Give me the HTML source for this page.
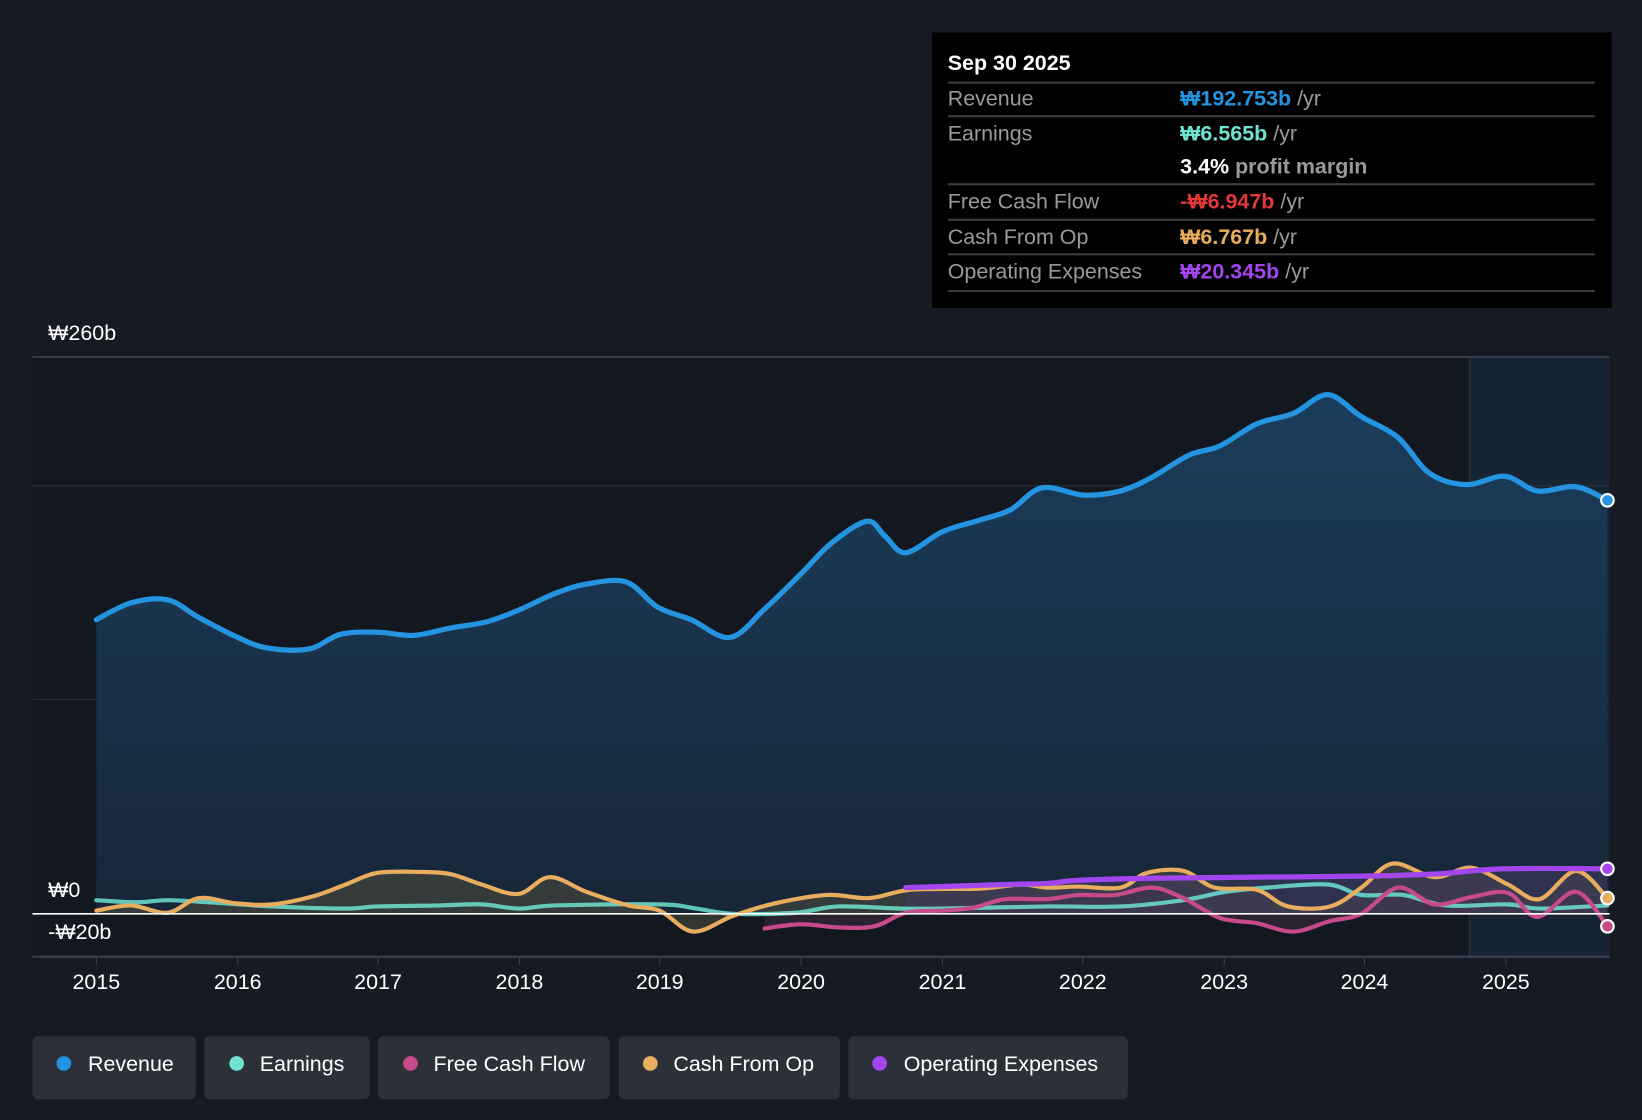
<!DOCTYPE html>
<html><head><meta charset="utf-8">
<style>
html,body{margin:0;padding:0;background:#151a23;}
svg{display:block;font-family:"Liberation Sans","Noto Sans CJK KR",sans-serif;}
</style></head>
<body>
<svg width="1642" height="1120" viewBox="0 0 1568 1070" preserveAspectRatio="none" xmlns="http://www.w3.org/2000/svg">
<defs>
<linearGradient id="rg" x1="0" y1="0" x2="0" y2="1">
<stop offset="0" stop-color="#1a3d5c"/><stop offset="1" stop-color="#172637"/>
</linearGradient>
</defs>
<rect width="1568" height="1070" fill="#151a23"/>
<rect x="31" y="341" width="1506" height="573" fill="#121720"/>
<rect x="1403" y="341" width="134" height="573" fill="#172434"/>
<line x1="1403" y1="341" x2="1403" y2="914" stroke="#2a3646" stroke-width="1"/>
<line x1="31" y1="341" x2="1537" y2="341" stroke="#3a4150" stroke-width="1.5"/>
<line x1="31" y1="464" x2="1537" y2="464" stroke="#2b313d" stroke-width="1"/>
<line x1="31" y1="668" x2="1537" y2="668" stroke="#2b313d" stroke-width="1"/>
<g id="areas"></g>
<g id="lines" fill="none" stroke-linejoin="round" stroke-linecap="round">
<polyline data-c="#6fe3d0" stroke="#6fe3d0" stroke-width="4" opacity="0.85" points="92,860 130,862 160,860 200,862 260,866 330,868 360,866 420,865 460,864 495,868 530,865 630,864 665,868 700,873 760,872 800,866 860,868 900,868 1000,866 1070,866 1130,860 1170,852 1210,848 1268,845 1300,855 1340,855 1380,865 1440,864 1470,868 1535,865"/>
<polyline data-f="#4a4a3e" stroke="#e8ad5e" stroke-width="4" points="92,870 125,865 160,872 190,858 225,863 260,864 300,856 330,845 360,834 400,833 430,835 460,845 495,854 525,838 560,852 600,865 630,870 662,890 700,875 740,863 790,855 830,858 870,850 935,849 975,845 1000,848 1030,847 1070,848 1095,834 1130,832 1160,848 1200,850 1230,866 1270,866 1300,848 1330,825 1370,838 1405,829 1440,845 1470,859 1505,832 1535,858"/>
<polyline data-f="#3a2a38" stroke="#c74a8a" stroke-width="4" points="730,887 765,883 800,886 835,885 865,872 900,870 930,867 960,859 1000,859 1030,855 1065,855 1100,848 1130,858 1165,877 1200,882 1235,890 1270,880 1300,873 1335,848 1370,864 1405,857 1440,853 1468,876 1505,852 1535,885"/>
<polyline data-f="#3f3a5e" stroke="#a446f0" stroke-width="5" points="865,848 960,845 1000,844 1030,841 1100,839 1200,838 1300,837 1370,835 1437,830 1535,830"/>
<polyline data-f="url(#rg)" data-o="1" stroke="#2594e0" stroke-width="5" points="92,592 125,576 160,573 190,590 225,608 255,619 295,620 325,606 360,604 395,607 430,600 465,594 495,583 530,567 560,558 598,556 628,580 660,592 697,609 730,582 765,548 795,518 828,498 845,512 865,528 900,508 935,497 965,487 995,466 1035,473 1070,469 1100,456 1135,435 1165,426 1200,405 1235,395 1268,377 1300,398 1335,418 1365,452 1400,463 1437,455 1468,469 1505,465 1535,478"/>
</g>
<line x1="31" y1="873" x2="1537" y2="873" stroke="#ffffff" stroke-width="1.5"/>
<line x1="31" y1="914" x2="1537" y2="914" stroke="#3a4150" stroke-width="2"/>
<circle cx="1535" cy="478" r="6" fill="#2594e0" stroke="#fff" stroke-width="2"/>
<circle cx="1535" cy="830" r="6" fill="#a446f0" stroke="#fff" stroke-width="2"/>
<circle cx="1535" cy="858" r="6" fill="#e8ad5e" stroke="#fff" stroke-width="2"/>
<circle cx="1535" cy="885" r="6" fill="#c74a8a" stroke="#fff" stroke-width="2"/>
<g fill="#fff" font-size="20.5">
<text x="46" y="325">₩260b</text>
<text x="46" y="857">₩0</text>
<text x="46" y="897">-₩20b</text>
</g>
<g stroke="#3a4150" stroke-width="1">
<line x1="92" y1="914" x2="92" y2="922"/><line x1="227" y1="914" x2="227" y2="922"/><line x1="361" y1="914" x2="361" y2="922"/><line x1="496" y1="914" x2="496" y2="922"/><line x1="630" y1="914" x2="630" y2="922"/><line x1="765" y1="914" x2="765" y2="922"/><line x1="900" y1="914" x2="900" y2="922"/><line x1="1034" y1="914" x2="1034" y2="922"/><line x1="1169" y1="914" x2="1169" y2="922"/><line x1="1303" y1="914" x2="1303" y2="922"/><line x1="1438" y1="914" x2="1438" y2="922"/>
</g>
<g fill="#fff" font-size="20.5" text-anchor="middle">
<text x="92" y="945">2015</text><text x="227" y="945">2016</text><text x="361" y="945">2017</text><text x="496" y="945">2018</text><text x="630" y="945">2019</text><text x="765" y="945">2020</text><text x="900" y="945">2021</text><text x="1034" y="945">2022</text><text x="1169" y="945">2023</text><text x="1303" y="945">2024</text><text x="1438" y="945">2025</text>
</g>
<rect x="890" y="31" width="649" height="263" fill="#000"/>
<text x="905" y="67" fill="#fff" font-size="20.5" font-weight="bold">Sep 30 2025</text>
<g stroke="#3d3d3d" stroke-width="2">
<line x1="905" y1="79" x2="1523" y2="79"/><line x1="905" y1="111" x2="1523" y2="111"/><line x1="905" y1="176" x2="1523" y2="176"/><line x1="905" y1="210" x2="1523" y2="210"/><line x1="905" y1="243" x2="1523" y2="243"/><line x1="905" y1="278" x2="1523" y2="278"/>
</g>
<g font-size="20.5" fill="#9a9a9a">
<text x="905" y="101">Revenue</text>
<text x="905" y="134">Earnings</text>
<text x="905" y="199">Free Cash Flow</text>
<text x="905" y="233">Cash From Op</text>
<text x="905" y="266">Operating Expenses</text>
</g>
<g font-size="20.5" font-weight="bold">
<text x="1127" y="101"><tspan fill="#2594e0">₩192.753b</tspan><tspan fill="#9a9a9a" font-weight="normal"> /yr</tspan></text>
<text x="1127" y="134"><tspan fill="#6fe3d0">₩6.565b</tspan><tspan fill="#9a9a9a" font-weight="normal"> /yr</tspan></text>
<text x="1127" y="166"><tspan fill="#fff">3.4%</tspan><tspan fill="#9a9a9a"> profit margin</tspan></text>
<text x="1127" y="199"><tspan fill="#e5383b">-₩6.947b</tspan><tspan fill="#9a9a9a" font-weight="normal"> /yr</tspan></text>
<text x="1127" y="233"><tspan fill="#e8ad5e">₩6.767b</tspan><tspan fill="#9a9a9a" font-weight="normal"> /yr</tspan></text>
<text x="1127" y="266"><tspan fill="#a446f0">₩20.345b</tspan><tspan fill="#9a9a9a" font-weight="normal"> /yr</tspan></text>
</g>
<g fill="#2c3039">
<rect x="31" y="990" width="156" height="60" rx="5"/>
<rect x="195" y="990" width="158" height="60" rx="5"/>
<rect x="361" y="990" width="221" height="60" rx="5"/>
<rect x="591" y="990" width="211" height="60" rx="5"/>
<rect x="810" y="990" width="267" height="60" rx="5"/>
</g>
<circle cx="61" cy="1016" r="7" fill="#2594e0"/>
<circle cx="226" cy="1016" r="7" fill="#6fe3d0"/>
<circle cx="392" cy="1016" r="7" fill="#c74a8a"/>
<circle cx="621" cy="1016" r="7" fill="#e8ad5e"/>
<circle cx="840" cy="1016" r="7" fill="#a446f0"/>
<g fill="#fff" font-size="20.5">
<text x="84" y="1023">Revenue</text>
<text x="248" y="1023">Earnings</text>
<text x="414" y="1023">Free Cash Flow</text>
<text x="643" y="1023">Cash From Op</text>
<text x="863" y="1023">Operating Expenses</text>
</g>
</svg>
<script>
(function(){
var NS="http://www.w3.org/2000/svg";
var areas=document.getElementById('areas');
var pls=[].slice.call(document.querySelectorAll('#lines polyline'));
pls.forEach(function(pl){
  var p=pl.getAttribute('points').trim().split(/\s+/).map(function(s){var a=s.split(',');return [+a[0],+a[1]];});
  var d='M'+p[0][0]+','+p[0][1];
  for(var i=0;i<p.length-1;i++){
    var p0=p[i-1]||p[i],p1=p[i],p2=p[i+1],p3=p[i+2]||p2;
    var c1x=p1[0]+(p2[0]-p0[0])/6,c1y=p1[1]+(p2[1]-p0[1])/6;
    var c2x=p2[0]-(p3[0]-p1[0])/6,c2y=p2[1]-(p3[1]-p1[1])/6;
    d+=' C'+c1x.toFixed(1)+','+c1y.toFixed(1)+' '+c2x.toFixed(1)+','+c2y.toFixed(1)+' '+p2[0]+','+p2[1];
  }
  var path=document.createElementNS(NS,'path');
  ['stroke','stroke-width','opacity'].forEach(function(a){if(pl.getAttribute(a))path.setAttribute(a,pl.getAttribute(a));});
  path.setAttribute('d',d);
  pl.parentNode.replaceChild(path,pl);
  var f=pl.getAttribute('data-f');
  if(f){
    var ar=document.createElementNS(NS,'path');
    ar.setAttribute('d',d+' L'+p[p.length-1][0]+',873 L'+p[0][0]+',873 Z');
    ar.setAttribute('fill',f);
    ar.setAttribute('opacity',pl.getAttribute('data-o')||'0.6');
    if(f.indexOf('url')===0)areas.insertBefore(ar,areas.firstChild);else areas.appendChild(ar);
  }
});
})();
</script>
</body></html>
